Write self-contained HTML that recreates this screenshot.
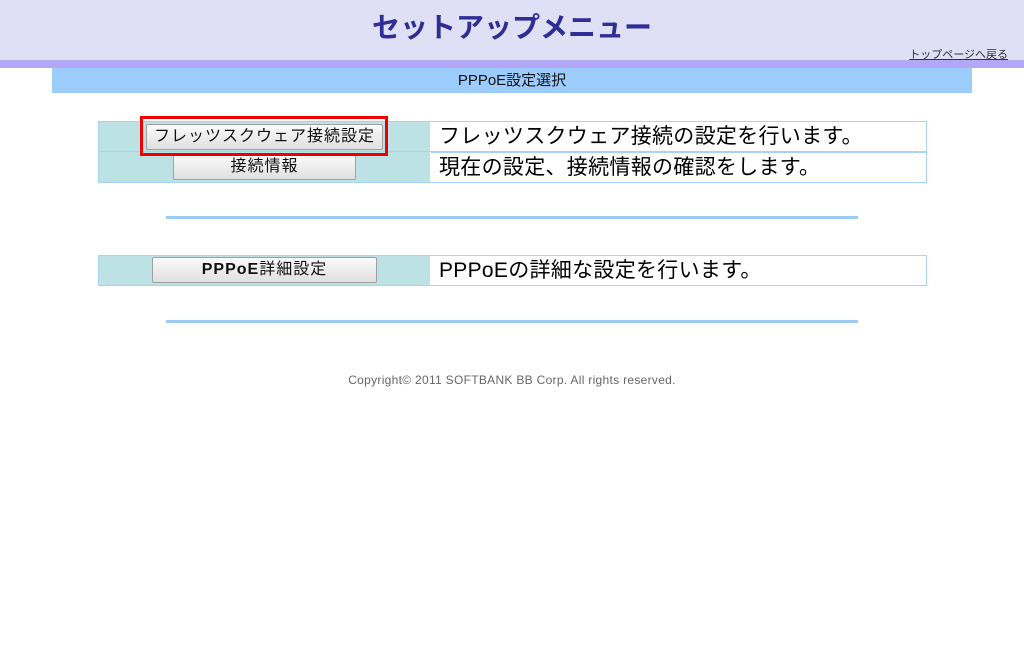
<!DOCTYPE html>
<html><head><meta charset="utf-8"><style>
body{margin:0;background:#fff;font-family:"Liberation Sans","Noto Sans CJK JP",sans-serif;width:1024px;height:667px;position:relative;overflow:hidden}
.hdr{position:absolute;left:0;top:0;width:1024px;height:60px;background:#dfdff5}
.ttl{position:absolute;left:0;width:1024px;top:6px;text-align:center;font-size:28px;font-weight:bold;color:#2e2e96}
.top{position:absolute;right:16px;top:46px;font-size:11px;color:#333;text-decoration:underline}
.pb{position:absolute;left:0;top:60px;width:1024px;height:8px;background:#b4a8f6}
.sub{position:absolute;left:52px;top:68px;width:920px;height:25px;background:#9cccfc;text-align:center;font-size:15px;line-height:25px;color:#111}
.row{position:absolute;left:98px;width:827px;height:29px;border:1px solid #a8d4f0;box-sizing:content-box}
.l{position:absolute;left:0;top:0;width:331px;height:100%;background:#bde2e6}
.r{position:absolute;left:332px;top:0;right:0;height:100%;background:#fff;font-size:21px;line-height:29px;padding-left:8px;color:#000;letter-spacing:0.3px}
.btn{position:absolute;height:26px;top:1px;background:linear-gradient(#fbfbfb,#e0e0e0);border:1px solid #a0a0a0;border-radius:2px;box-sizing:border-box;text-align:center;font-size:16px;line-height:24px;color:#111;letter-spacing:1px}
.hr{position:absolute;left:166px;width:692px;height:3px;background:#9cccf4}
.cp{position:absolute;top:373px;left:0;width:1024px;text-align:center;font-size:12px;color:#666;letter-spacing:0.3px}
</style></head><body>
<div class="hdr"><div class="ttl">セットアップメニュー</div><div class="top">トップページへ戻る</div></div>
<div class="pb"></div>
<div class="sub">PPPoE設定選択</div>
<div class="row" style="top:121px;height:30px;border-bottom:none"><div class="l"></div><div class="r" style="line-height:30px">フレッツスクウェア接続の設定を行います。</div>
<div class="btn" style="left:47px;width:237px;top:2px">フレッツスクウェア接続設定</div></div>
<div class="row" style="top:151px;height:30px"><div class="l"></div><div class="r" style="border-top:1px solid #a8d4f0;height:29px;line-height:29px">現在の設定、接続情報の確認をします。</div>
<div class="btn" style="left:74px;width:183px;top:2px">接続情報</div></div>
<div style="position:absolute;left:140px;top:116px;width:248px;height:40px;border:3px solid #e00;box-sizing:border-box"></div>
<div class="hr" style="top:216px"></div>
<div class="row" style="top:255px"><div class="l"></div><div class="r">PPPoEの詳細な設定を行います。</div>
<div class="btn" style="left:53px;width:225px"><b>PPPoE</b>詳細設定</div></div>
<div class="hr" style="top:320px"></div>
<div class="cp">Copyright© 2011 SOFTBANK BB Corp. All rights reserved.</div>
</body></html>
